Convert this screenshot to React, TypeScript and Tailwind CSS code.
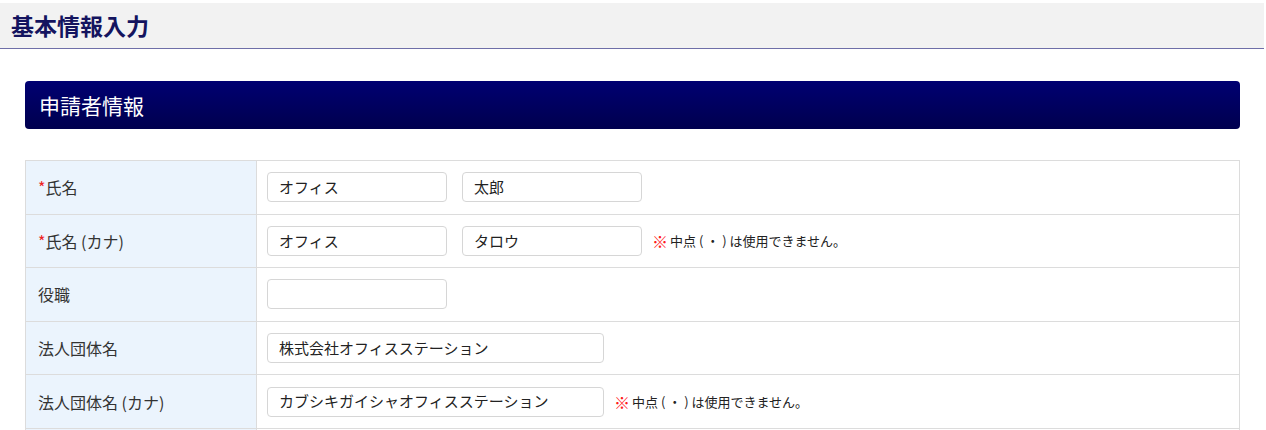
import React from "react";

const font = { fontFamily: '"Noto Sans CJK JP", "Noto Sans", sans-serif' };

function Field({ value, w }: { value: string; w: string }) {
  return (
    <div
      className={`${w} h-[30px] rounded-[4px] border border-[#d6d6d6] bg-white px-[11px] flex items-center text-[15px] text-[#222]`}
    >
      {value}
    </div>
  );
}

function Note() {
  return (
    <span className="ml-[10px] text-[13px] text-[#222] flex items-center">
      <span className="text-[#ff1a1a] font-bold text-[16px] leading-none mr-[2px]">※</span>中点 ( ・ ) は使用できません。
    </span>
  );
}

function Row({
  label,
  req,
  children,
}: {
  label: string;
  req?: boolean;
  children: React.ReactNode;
}) {
  return (
    <div className="flex h-[53.6px] border-b border-[#dcdcdc]">
      <div className="w-[231px] shrink-0 bg-[#ebf4fd] border-r border-[#dcdcdc] flex items-center pl-[12px] text-[16px] text-[#333]">
        {req && <span className="text-[#ee2222]">*</span>}
        {label}
      </div>
      <div className="flex items-center pl-[10px] gap-[15px]">{children}</div>
    </div>
  );
}

export default function App() {
  return (
    <div className="w-[1266px] h-[430px] bg-white overflow-hidden" style={font}>
      <div className="h-[3px]" />
      <div className="w-[1264px] h-[46px] bg-[#f2f2f2] border-b border-[#6f6fa8] flex items-center pl-[11px]">
        <h1 className="text-[23px] font-bold text-[#14145f] leading-none">基本情報入力</h1>
      </div>
      <div className="ml-[25px] w-[1215px]">
        <div className="mt-[32px] h-[48px] rounded-[4px] bg-gradient-to-b from-[#000072] to-[#00004e] flex items-center pl-[14px]">
          <h2 className="text-[21px] text-white leading-none">申請者情報</h2>
        </div>
        <div className="mt-[31px] border-t border-l border-r border-[#dcdcdc]">
          <Row label="氏名" req>
            <Field value="オフィス" w="w-[180px]" />
            <Field value="太郎" w="w-[180px]" />
          </Row>
          <Row label="氏名 (カナ)" req>
            <Field value="オフィス" w="w-[180px]" />
            <div className="flex items-center">
              <Field value="タロウ" w="w-[180px]" />
              <Note />
            </div>
          </Row>
          <Row label="役職">
            <Field value="" w="w-[180px]" />
          </Row>
          <Row label="法人団体名">
            <Field value="株式会社オフィスステーション" w="w-[337px]" />
          </Row>
          <Row label="法人団体名 (カナ)">
            <div className="flex items-center">
              <Field value="カブシキガイシャオフィスステーション" w="w-[337px]" />
              <Note />
            </div>
          </Row>
          <Row label="">
            <div />
          </Row>
        </div>
      </div>
    </div>
  );
}
